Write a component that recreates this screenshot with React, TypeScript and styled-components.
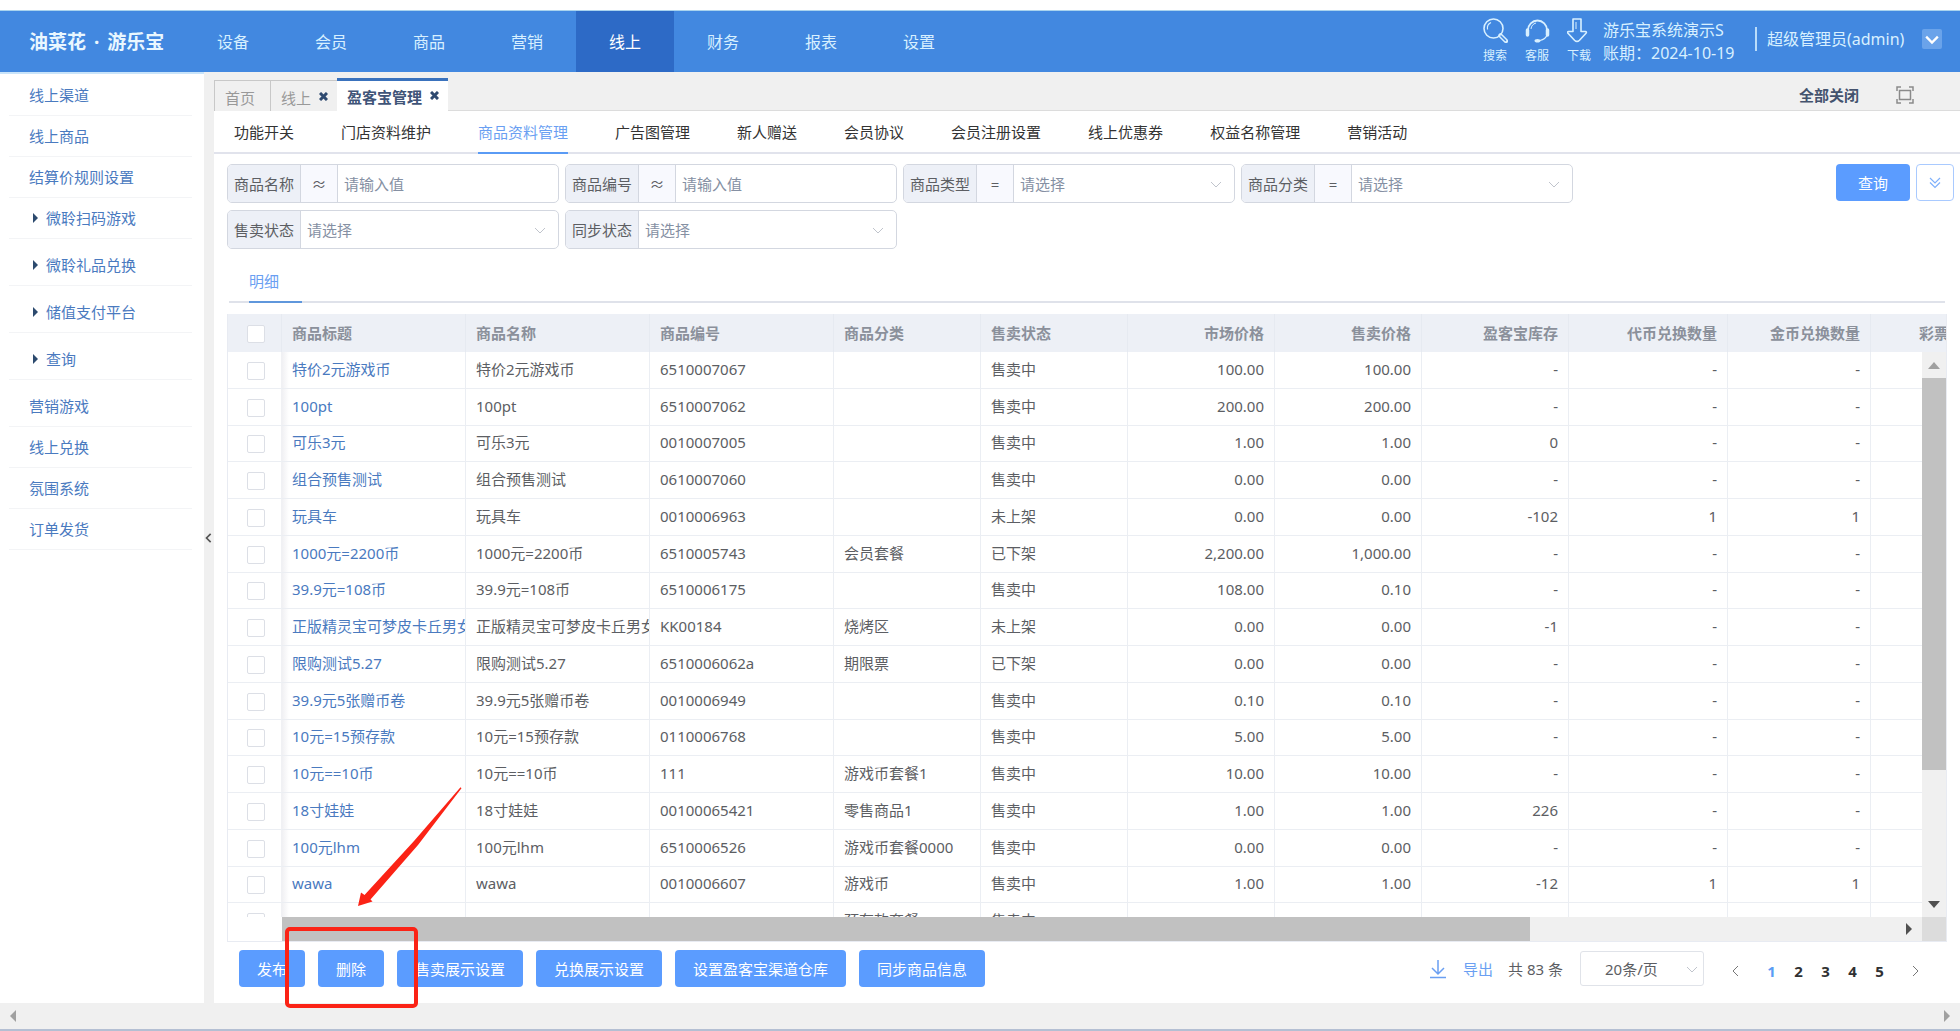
import React, { useState } from "react";
import styled, { createGlobalStyle } from "styled-components";

const GlobalStyle = createGlobalStyle`
  *, *::before, *::after { box-sizing: border-box; }
  html, body, #root { height: 100%; }
  body {
    margin: 0;
    background: #fff;
    color: #5c5e63;
    font-family: "Noto Sans", "Noto Sans CJK SC", sans-serif;
    font-size: 15px;
    line-height: 20px;
    overflow: hidden;
  }
  button, input, select { font: inherit; color: inherit; margin: 0; }
  button { cursor: pointer; border: 0; background: none; padding: 0; }
  a { color: inherit; text-decoration: none; }
  svg { display: block; }
  ul { list-style: none; margin: 0; padding: 0; }
`;

const Page = styled.div`
  display: flex;
  flex-direction: column;
  height: 100vh;
  padding-top: 10px;
  position: relative;
`;

/* ---------- header ---------- */
const Header = styled.header`
  display: flex;
  align-items: stretch;
  flex: none;
  height: 62px;
  border-top: 1px solid #a9d3ee;
  background: #4288e0;
  color: #d8f0ff;
  font-size: 16px;
`;
const Logo = styled.div`
  width: 184px;
  padding-left: 29px;
  display: flex;
  align-items: center;
  gap: 8px;
  font-size: 19px;
  font-weight: 700;
  color: #e9f7ff;
`;
const Nav = styled.nav`
  display: flex;
  flex: 1;
`;
const NavLink = styled.a<{ $active?: boolean }>`
  width: 98px;
  display: flex;
  align-items: center;
  justify-content: center;
  background: ${(p) => (p.$active ? "#2d6ac6" : "transparent")};
  color: ${(p) => (p.$active ? "#fff" : "inherit")};
`;
const Tools = styled.div`
  display: flex;
  gap: 17px;
  padding-top: 7px;
`;
const Tool = styled.button`
  display: flex;
  flex-direction: column;
  align-items: flex-start;
  gap: 5px;
  width: 25px;
  height: 46px;
  font-size: 12px;
  line-height: 16px;
  white-space: nowrap;
`;
const Account = styled.div`
  margin-left: 11px;
  padding-top: 8px;
  width: 152px;
  line-height: 23px;
  white-space: nowrap;
`;
const User = styled.div`
  display: flex;
  align-items: center;
  justify-content: space-between;
  width: 187px;
  height: 24px;
  margin: 16px 18px 0 0;
  padding-left: 10px;
  border-left: 2px solid #b9dcfa;
  white-space: nowrap;
`;
const UserMenu = styled.button`
  width: 20px;
  height: 20px;
  display: grid;
  place-items: center;
  background: #6aa3ea;
  border-radius: 2px;
  color: #fff;
`;

/* ---------- body ---------- */
const Body = styled.div`
  display: flex;
  flex: 1;
  min-height: 0;
  background: #f0f0f0;
`;
const Sidebar = styled.aside`
  width: 204px;
  flex: none;
  background: #fff;
  border-top: 2px solid #c9e4fa;
  padding: 1px 12px 0 9px;
  color: #4a7abf;
`;
const SideItem = styled.li<{ $nested?: boolean }>`
  height: 41px;
  border-bottom: 1px solid #f3f4f6;
  margin-bottom: ${(p) => (p.$nested ? 6 : 0)}px;
  a {
    display: flex;
    align-items: center;
    gap: 8px;
    height: 100%;
    padding-left: ${(p) => (p.$nested ? 24 : 20)}px;
  }
`;
const Caret = styled.span`
  border: 5px solid transparent;
  border-left-color: #2c4a6e;
  border-right-width: 0;
`;
const Gutter = styled.button`
  width: 10px;
  flex: none;
  color: #555;
  display: grid;
  place-items: center;
`;
const Main = styled.main`
  flex: 1;
  min-width: 0;
  display: flex;
  flex-direction: column;
`;

/* ---------- window tabs ---------- */
const TabStrip = styled.div`
  display: flex;
  align-items: flex-end;
  height: 39px;
  flex: none;
`;
const WinTab = styled.div<{ $active?: boolean }>`
  display: flex;
  align-items: center;
  gap: 8px;
  min-width: 56px;
  height: ${(p) => (p.$active ? 33 : 31)}px;
  padding: ${(p) => (p.$active ? 2 : 3)}px 9px 0 10px;
  border: ${(p) => (p.$active ? "0" : "1px solid #c8c8c8")};
  border-right-width: 0;
  border-bottom: 0;
  border-top: ${(p) => (p.$active ? "3px solid #3a72bd" : "1px solid #c8c8c8")};
  background: ${(p) => (p.$active ? "#fff" : "transparent")};
  color: ${(p) => (p.$active ? "#3f5478" : "#999")};
  font-weight: ${(p) => (p.$active ? 700 : 400)};
  button { margin-top: -3px; }
`;
const TabTools = styled.div`
  flex: 1;
  align-self: stretch;
  display: flex;
  justify-content: flex-end;
  align-items: center;
  gap: 37px;
  padding: 8px 46px 0 0;
  border-bottom: 1px solid #dcdcdc;
  color: #8a8a8a;
`;
const CloseAll = styled.button`
  font-weight: 700;
  color: #44536e;
`;

/* ---------- content ---------- */
const Content = styled.section`
  background: #fff;
  flex: 1;
  min-height: 0;
  display: flex;
  flex-direction: column;
`;
const SubTabs = styled.nav`
  display: flex;
  gap: 47px;
  height: 43px;
  flex: none;
  padding-left: 20px;
  border-bottom: 2px solid #e1e3ec;
`;
const SubTab = styled.a<{ $active?: boolean }>`
  display: flex;
  align-items: center;
  height: 43px;
  border-bottom: 2px solid ${(p) => (p.$active ? "#5a9bf5" : "transparent")};
  color: ${(p) => (p.$active ? "#6a9ff2" : "#333")};
`;
const Inner = styled.div`
  flex: 1;
  min-height: 0;
  padding: 10px 13px 0 13px;
  display: flex;
  flex-direction: column;
`;
const FilterBar = styled.form`
  display: flex;
  justify-content: space-between;
  align-items: flex-start;
  margin-right: -7px;
`;
const Filters = styled.div`
  display: grid;
  grid-template-columns: repeat(4, 332px);
  gap: 7px 6px;
`;
const Field = styled.label`
  display: flex;
  height: 39px;
  border: 1px solid #d3d7e0;
  border-radius: 5px;
  overflow: hidden;
  position: relative;
`;
const FieldName = styled.span`
  width: 73px;
  flex: none;
  display: grid;
  place-items: center;
  background: #edf0f7;
  border-right: 1px solid #d3d7e0;
`;
const Operator = styled(FieldName)`
  width: 37px;
  background: #f8f9fe;
`;
const TextBox = styled.input`
  flex: 1;
  min-width: 0;
  border: 0;
  outline: 0;
  padding: 0 6px;
  background: transparent;
  &::placeholder { color: #8590a3; opacity: 1; }
`;
const SelectBox = styled.select`
  flex: 1;
  min-width: 0;
  border: 0;
  outline: 0;
  appearance: none;
  padding: 0 6px;
  background: transparent;
  color: #8590a3;
`;
const SelectMark = styled.span`
  position: absolute;
  right: 12px;
  top: 50%;
  margin-top: -6px;
  color: #c0c4cc;
  pointer-events: none;
`;
const Actions = styled.div`
  display: flex;
  gap: 6px;
`;
const Button = styled.button`
  height: 37px;
  padding: 0 18px;
  border-radius: 4px;
  background: #5b9cff;
  color: #fff;
  white-space: nowrap;
`;
const SearchButton = styled(Button)`
  padding: 0 22px;
`;
const MoreButton = styled.button`
  width: 38px;
  height: 37px;
  display: grid;
  place-items: center;
  border: 1px solid #a9caff;
  border-radius: 4px;
  color: #7fb0fb;
`;
const DetailTabs = styled.div`
  margin: 11px 2px 0 2px;
  height: 43px;
  flex: none;
  padding-left: 20px;
  border-bottom: 2px solid #dfe2ea;
`;
const DetailTab = styled.a`
  display: block;
  width: 53px;
  height: 43px;
  padding-top: 11px;
  border-bottom: 2px solid #5f97dc;
  color: #6a9ff2;
`;

/* ---------- data grid ---------- */
const GridBox = styled.div`
  margin-top: 11px;
  flex: none;
  border: 1px solid #e8ebf2;
  border-top: 0;
`;
const HeadClip = styled.div`
  overflow: hidden;
  background: #edf0f6;
`;
const BodyArea = styled.div`
  display: grid;
  grid-template-columns: 1fr 24px;
  grid-template-rows: 565px 24px;
`;
const BodyClip = styled.div`
  overflow: hidden;
`;
const Table = styled.table`
  table-layout: fixed;
  border-collapse: separate;
  border-spacing: 0;
  width: 1792px;
`;
const BodyTable = styled(Table)`
  height: 588px;
`;
const Cell = styled.td<{ $num?: boolean; $link?: boolean }>`
  padding: 0 10px 2px;
  border-right: 1px solid #ebeef3;
  border-bottom: 1px solid #ebeef3;
  text-align: ${(p) => (p.$num ? "right" : "left")};
  color: ${(p) => (p.$link ? "#4a7abf" : "#5c5e63")};
  white-space: nowrap;
  overflow: hidden;
  a { display: block; margin-right: -10px; overflow: hidden; }
`;
const PlainText = styled.span`
  display: block;
  margin-right: -10px;
  overflow: hidden;
`;
const HeadCell = styled.th<{ $num?: boolean }>`
  height: 38px;
  padding: 0 10px;
  border-right: 1px solid #e6eaf1;
  text-align: ${(p) => (p.$num ? "right" : "left")};
  color: #8b909b;
  font-weight: 700;
  white-space: nowrap;
`;
const CheckCell = styled(Cell)`
  padding: 0 0 0 19px;
  border-right-color: #f0f1f4;
  & + td { background: linear-gradient(90deg, #f0f0f3, #fff 7px); }
`;
const CheckHead = styled(HeadCell)`
  padding: 0 0 0 19px;
`;
const Check = styled.input`
  appearance: none;
  display: block;
  width: 18px;
  height: 18px;
  margin: 2px 0 0;
  border: 1px solid #dcdfe6;
  border-radius: 2px;
  background: #fff;
  &:checked { background: #5b9cff; }
`;
const VTrack = styled.div`
  background: #f0f0f0;
  display: flex;
  flex-direction: column;
  align-items: center;
`;
const VThumb = styled.div`
  width: 24px;
  height: 392px;
  background: #c1c1c1;
`;
const HTrack = styled.div`
  background: #f0f0f0;
  margin-left: 54px;
  display: flex;
  align-items: center;
  justify-content: space-between;
  padding-right: 7px;
`;
const HThumb = styled.div`
  width: 76.4%;
  height: 24px;
  background: #c1c1c1;
`;
const Corner = styled.div`
  background: #dcdcdc;
`;
const ArrowBox = styled.span`
  height: 26px;
  display: grid;
  place-items: center;
`;
const Spacer = styled.span`
  flex: 1;
`;

/* ---------- footer ---------- */
const Footer = styled.div`
  display: flex;
  justify-content: space-between;
  align-items: center;
  padding: 8px 24px 0 12px;
`;
const ButtonRow = styled.div`
  display: flex;
  gap: 13px;
`;
const Pager = styled.div`
  display: flex;
  align-items: center;
`;
const ExportLink = styled.button`
  display: flex;
  align-items: center;
  gap: 17px;
  color: #6a9ff2;
  margin-right: 15px;
`;
const Total = styled.span`
  margin-right: 17px;
`;
const PageSize = styled.label`
  position: relative;
  display: flex;
  width: 124px;
  height: 35px;
  border: 1px solid #e0e3e9;
  border-radius: 3px;
  margin-right: 24px;
  select { padding-left: 24px; color: #5c5e63; }
  span { right: 5px; }
`;
const PageButton = styled.button<{ $current?: boolean }>`
  width: 27px;
  height: 27px;
  margin-top: 4px;
  font-weight: 700;
  color: ${(p) => (p.$current ? "#5b9cf5" : "#303133")};
`;
const Step = styled.button`
  width: 16px;
  height: 27px;
  margin: 4px 14px 0 0;
  display: grid;
  place-items: center;
  color: #777;
  &:last-child { margin: 4px 0 0 14px; }
`;

/* ---------- window scrollbar ---------- */
const PageScroll = styled.div`
  display: flex;
  justify-content: space-between;
  align-items: center;
  flex: none;
  height: 28px;
  padding: 0 7px;
  background: #f0f0f0;
  border-bottom: 2px solid #b4bfd3;
`;

/* ---------- annotation over the page ---------- */
const MarkBox = styled.div`
  position: absolute;
  left: 285px;
  top: 927px;
  width: 133px;
  height: 81px;
  border: 4px solid #fb2316;
  border-radius: 5px;
  pointer-events: none;
`;
const MarkArrow = styled.svg`
  position: absolute;
  left: 356px;
  top: 786px;
  pointer-events: none;
`;

type ChevronProps = { dir?: "down" | "left" | "right"; size?: number; width?: number };
const Chevron = ({ dir = "down", size = 12, width = 1 }: ChevronProps) => {
  const d = { down: "M1 4l5 5 5-5", left: "M8 1L3 6l5 5", right: "M4 1l5 5-5 5" }[dir];
  return (
    <svg width={size} height={size} viewBox="0 0 12 12" fill="none" stroke="currentColor" strokeWidth={width}>
      <path d={d} />
    </svg>
  );
};
const Triangle = ({ dir, color }: { dir: "up" | "down" | "left" | "right"; color: string }) => {
  const pts = { up: "0,10 12,10 6,3", down: "0,3 12,3 6,10", left: "9,0 9,12 3,6", right: "3,0 3,12 9,6" }[dir];
  return (
    <svg width="12" height="12" viewBox="0 0 12 12">
      <polygon points={pts} fill={color} />
    </svg>
  );
};
const Close = () => (
  <svg width="9" height="9" viewBox="0 0 9 9" stroke="#2f4a70" strokeWidth="3">
    <path d="M1 1l7 7M8 1l-7 7" />
  </svg>
);

const nav = ["设备", "会员", "商品", "营销", "线上", "财务", "报表", "设置"];
const side: [string, boolean][] = [
  ["线上渠道", false],
  ["线上商品", false],
  ["结算价规则设置", false],
  ["微聆扫码游戏", true],
  ["微聆礼品兑换", true],
  ["储值支付平台", true],
  ["查询", true],
  ["营销游戏", false],
  ["线上兑换", false],
  ["氛围系统", false],
  ["订单发货", false],
];
const subTabs = [
  "功能开关", "门店资料维护", "商品资料管理", "广告图管理", "新人赠送",
  "会员协议", "会员注册设置", "线上优惠券", "权益名称管理", "营销活动",
];
const filters: { name: string; op?: string; select?: boolean }[] = [
  { name: "商品名称", op: "≈" },
  { name: "商品编号", op: "≈" },
  { name: "商品类型", op: "=", select: true },
  { name: "商品分类", op: "=", select: true },
  { name: "售卖状态", select: true },
  { name: "同步状态", select: true },
];
const columns: [string, number][] = [
  ["商品标题", 184], ["商品名称", 184], ["商品编号", 184], ["商品分类", 147], ["售卖状态", 147],
  ["市场价格", 147], ["售卖价格", 147], ["盈客宝库存", 147], ["代币兑换数量", 159], ["金币兑换数量", 143],
  ["彩票兑换数量", 149],
];
const rows: string[][] = [
  ["特价2元游戏币", "6510007067", "", "售卖中", "100.00", "100.00", "-", "-", "-"],
  ["100pt", "6510007062", "", "售卖中", "200.00", "200.00", "-", "-", "-"],
  ["可乐3元", "0010007005", "", "售卖中", "1.00", "1.00", "0", "-", "-"],
  ["组合预售测试", "0610007060", "", "售卖中", "0.00", "0.00", "-", "-", "-"],
  ["玩具车", "0010006963", "", "未上架", "0.00", "0.00", "-102", "1", "1"],
  ["1000元=2200币", "6510005743", "会员套餐", "已下架", "2,200.00", "1,000.00", "-", "-", "-"],
  ["39.9元=108币", "6510006175", "", "售卖中", "108.00", "0.10", "-", "-", "-"],
  ["正版精灵宝可梦皮卡丘男女", "KK00184", "烧烤区", "未上架", "0.00", "0.00", "-1", "-", "-"],
  ["限购测试5.27", "6510006062a", "期限票", "已下架", "0.00", "0.00", "-", "-", "-"],
  ["39.9元5张赠币卷", "0010006949", "", "售卖中", "0.10", "0.10", "-", "-", "-"],
  ["10元=15预存款", "0110006768", "", "售卖中", "5.00", "5.00", "-", "-", "-"],
  ["10元==10币", "111", "游戏币套餐1", "售卖中", "10.00", "10.00", "-", "-", "-"],
  ["18寸娃娃", "00100065421", "零售商品1", "售卖中", "1.00", "1.00", "226", "-", "-"],
  ["100元lhm", "6510006526", "游戏币套餐0000", "售卖中", "0.00", "0.00", "-", "-", "-"],
  ["wawa", "0010006607", "游戏币", "售卖中", "1.00", "1.00", "-12", "1", "1"],
  ["", "", "预存款套餐", "售卖中", "", "", "", "", ""],
];

const Columns = () => (
  <colgroup>
    <col width={54} />
    {columns.map(([name, w]) => (
      <col key={name} width={w} />
    ))}
  </colgroup>
);

export default function App() {
  const [page, setPage] = useState(1);
  return (
    <>
      <GlobalStyle />
      <Page>
        <Header>
          <Logo><span>油菜花</span><span>·</span><span>游乐宝</span></Logo>
          <Nav>
            {nav.map((n) => (
              <NavLink key={n} href="#" $active={n === "线上"}>{n}</NavLink>
            ))}
          </Nav>
          <Tools>
            <Tool>
              <svg width="25" height="25" viewBox="0 0 25 25" fill="none" stroke="currentColor" strokeWidth="1.6">
                <circle cx="10.500" cy="10.500" r="9.500" />
                <path d="M4.500 11.500a6.500 6.500 0 0 1 3.500-7" strokeWidth="1.200" />
                <path d="M17.500 17.500l5.500 5.500" strokeWidth="4.500" strokeLinecap="round" />
                <path d="M18 18l4.500 4.500" stroke="#4288e0" strokeWidth="1.500" strokeLinecap="round" />
              </svg>
              搜索
            </Tool>
            <Tool>
              <svg width="25" height="25" viewBox="0 0 25 25" fill="none" stroke="currentColor" strokeWidth="1.800">
                <path d="M3 12a9.500 9.500 0 0 1 19 0" />
                <path d="M6 11a7 7 0 0 1 5-6" strokeWidth="1" />
                <path d="M2.500 12v5M22.500 12v5" strokeWidth="3.500" strokeLinecap="round" />
                <path d="M22 17c-1 3-3 4.500-7 5.500" strokeWidth="1.200" />
                <ellipse cx="12.500" cy="22.800" rx="3" ry="1.800" fill="currentColor" stroke="none" />
              </svg>
              客服
            </Tool>
            <Tool>
              <svg width="25" height="25" viewBox="0 0 25 25" fill="none" stroke="currentColor" strokeWidth="1.600" strokeLinejoin="round">
                <path d="M6 1h8v12.500h4.500c1 0 1.200 1 .5 1.700l-6.500 7c-1.500 1.500-3.500 1.500-5 0l-6.500-7c-.7-.7-.5-1.700.5-1.700H6z" />
                <path d="M9 4v7" strokeWidth="1" />
              </svg>
              下载
            </Tool>
          </Tools>
          <Account>
            <div>游乐宝系统演示S</div>
            <div>账期：2024-10-19</div>
          </Account>
          <User>
            超级管理员(admin)
            <UserMenu aria-label="账户菜单"><Chevron size={14} width={2} /></UserMenu>
          </User>
        </Header>
        <Body>
          <Sidebar>
            <ul>
              {side.map(([name, nested]) => (
                <SideItem key={name} $nested={nested}>
                  <a href="#">{nested && <Caret />}{name}</a>
                </SideItem>
              ))}
            </ul>
          </Sidebar>
          <Gutter aria-label="收起"><Chevron dir="left" size={10} width={2} /></Gutter>
          <Main>
            <TabStrip>
              <WinTab>首页</WinTab>
              <WinTab>线上<button aria-label="关闭"><Close /></button></WinTab>
              <WinTab $active>盈客宝管理<button aria-label="关闭"><Close /></button></WinTab>
              <TabTools>
                <CloseAll>全部关闭</CloseAll>
                <button aria-label="全屏">
                  <svg width="18" height="18" viewBox="0 0 18 18" fill="none" stroke="currentColor" strokeWidth="1.500">
                    <path d="M1 5V1h4M13 1h4v4M17 13v4h-4M5 17H1v-4" />
                    <rect x="3.500" y="4.500" width="11" height="9" />
                  </svg>
                </button>
              </TabTools>
            </TabStrip>
            <Content>
              <SubTabs>
                {subTabs.map((t) => (
                  <SubTab key={t} href="#" $active={t === "商品资料管理"}>{t}</SubTab>
                ))}
              </SubTabs>
              <Inner>
                <FilterBar onSubmit={(e) => e.preventDefault()}>
                  <Filters>
                    {filters.map((f) => (
                      <Field key={f.name}>
                        <FieldName>{f.name}</FieldName>
                        {f.op && <Operator>{f.op}</Operator>}
                        {f.select ? (
                          <>
                            <SelectBox><option>请选择</option></SelectBox>
                            <SelectMark><Chevron /></SelectMark>
                          </>
                        ) : (
                          <TextBox placeholder="请输入值" />
                        )}
                      </Field>
                    ))}
                  </Filters>
                  <Actions>
                    <SearchButton type="submit">查询</SearchButton>
                    <MoreButton type="button" aria-label="展开">
                      <svg width="12" height="12" viewBox="0 0 12 12" fill="none" stroke="currentColor" strokeWidth="1.200">
                        <path d="M1 1l5 5 5-5M1 5.500l5 5 5-5" />
                      </svg>
                    </MoreButton>
                  </Actions>
                </FilterBar>
                <DetailTabs><DetailTab href="#">明细</DetailTab></DetailTabs>
                <GridBox>
                  <HeadClip>
                    <Table>
                      <Columns />
                      <thead>
                        <tr>
                          <CheckHead><Check type="checkbox" aria-label="全选" /></CheckHead>
                          {columns.map(([name], i) => (
                            <HeadCell key={name} $num={i > 4}>{name}</HeadCell>
                          ))}
                        </tr>
                      </thead>
                    </Table>
                  </HeadClip>
                  <BodyArea>
                    <BodyClip>
                      <BodyTable>
                        <Columns />
                        <tbody>
                          {rows.map((r, ri) => (
                            <tr key={ri}>
                              <CheckCell><Check type="checkbox" aria-label={r[0] || "选择"} /></CheckCell>
                              <Cell $link><a href="#">{r[0]}</a></Cell>
                              <Cell><PlainText>{r[0]}</PlainText></Cell>
                              {r.slice(1).map((v, i) => (
                                <Cell key={i} $num={i > 2}>{v}</Cell>
                              ))}
                              <Cell $num />
                            </tr>
                          ))}
                        </tbody>
                      </BodyTable>
                    </BodyClip>
                    <VTrack>
                      <ArrowBox><Triangle dir="up" color="#a0a0a0" /></ArrowBox>
                      <VThumb />
                      <Spacer />
                      <ArrowBox><Triangle dir="down" color="#505050" /></ArrowBox>
                    </VTrack>
                    <HTrack>
                      <HThumb />
                      <Triangle dir="right" color="#505050" />
                    </HTrack>
                    <Corner />
                  </BodyArea>
                </GridBox>
                <Footer>
                  <ButtonRow>
                    {["发布", "删除", "售卖展示设置", "兑换展示设置", "设置盈客宝渠道仓库", "同步商品信息"].map((b) => (
                      <Button key={b}>{b}</Button>
                    ))}
                  </ButtonRow>
                  <Pager>
                    <ExportLink>
                      <svg width="16" height="20" viewBox="0 0 16 20" fill="none" stroke="currentColor" strokeWidth="1.500">
                        <path d="M8 1v14M2 9l6 6 6-6M0 18.500h16" />
                      </svg>
                      导出
                    </ExportLink>
                    <Total>共 83 条</Total>
                    <PageSize aria-label="每页条数">
                      <SelectBox><option>20条/页</option></SelectBox>
                      <SelectMark><Chevron /></SelectMark>
                    </PageSize>
                    <Step aria-label="上一页"><Chevron dir="left" /></Step>
                    {[1, 2, 3, 4, 5].map((n) => (
                      <PageButton key={n} $current={n === page} onClick={() => setPage(n)}>{n}</PageButton>
                    ))}
                    <Step aria-label="下一页"><Chevron dir="right" /></Step>
                  </Pager>
                </Footer>
              </Inner>
            </Content>
          </Main>
        </Body>
        <PageScroll>
          <Triangle dir="left" color="#a0a0a0" />
          <Triangle dir="right" color="#a0a0a0" />
        </PageScroll>
        <MarkBox />
        <MarkArrow width="108" height="122" viewBox="0 0 108 122" fill="#fb2316">
          <path d="M105.500 2.200L104.500 1.200L58 55L8.500 109L5 106.500L2 120L16.500 115.500L14.500 113.500L62 59z" />
        </MarkArrow>
      </Page>
    </>
  );
}
